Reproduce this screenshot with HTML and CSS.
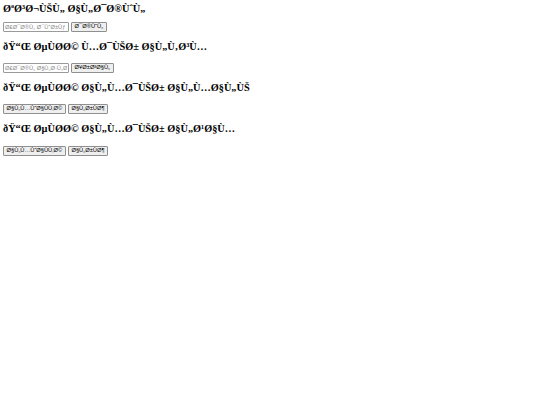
FILE: index.html
```html
<!DOCTYPE html>
<html lang="ar">
<head>
<meta charset="utf-8">
<title>Ø§Ù„Ù†Ø¸Ø§Ù…</title>
<link rel="stylesheet" href="styles.css">
</head>
<body>
<main class="page">
  <section class="block block-first">
    <h2 class="title">ØªØ³Ø¬ÙŠÙ„ Ø§Ù„Ø¯Ø®ÙˆÙ„</h2>
    <div class="row">
      <input class="field" type="text" placeholder="Ø£Ø¯Ø®Ù„ Ø¯ÙˆØ±Ùƒ (Ù…Ø¯ÙŠØ± Ù‚Ø³Ù…)">
      <button class="btn" type="button">Ø¯Ø®ÙˆÙ„</button>
    </div>
  </section>
  <section class="block">
    <h2 class="title">ðŸ“Œ ØµÙØ&shy;Ø© Ù…Ø¯ÙŠØ± Ø§Ù„Ù‚Ø³Ù…</h2>
    <div class="row">
      <input class="field" type="text" placeholder="Ø£Ø¯Ø®Ù„ Ø§Ù„Ø·Ù„Ø¨">
      <button class="btn" type="button">Ø¥Ø±Ø³Ø§Ù„</button>
    </div>
  </section>
  <section class="block">
    <h2 class="title">ðŸ“Œ ØµÙØ&shy;Ø© Ø§Ù„Ù…Ø¯ÙŠØ± Ø§Ù„Ù…Ø§Ù„ÙŠ</h2>
    <div class="row">
      <button class="btn" type="button">Ø§Ù„Ù…ÙˆØ§ÙÙ‚Ø©</button>
      <button class="btn" type="button">Ø§Ù„Ø±ÙØ¶</button>
    </div>
  </section>
  <section class="block block-last">
    <h2 class="title">ðŸ“Œ ØµÙØ&shy;Ø© Ø§Ù„Ù…Ø¯ÙŠØ± Ø§Ù„Ø¹Ø§Ù…</h2>
    <div class="row">
      <button class="btn" type="button">Ø§Ù„Ù…ÙˆØ§ÙÙ‚Ø©</button>
      <button class="btn" type="button">Ø§Ù„Ø±ÙØ¶</button>
    </div>
  </section>
</main>
</body>
</html>
```
FILE: styles.css
```css
html, body {
  margin: 0;
  padding: 0;
  background: #ffffff;
}
body {
  font-family: "Liberation Serif", "DejaVu Serif", serif;
  color: #000000;
}
.page {
  padding: 3px 3px;
  display: flex;
  flex-direction: column;
}
.block {
  display: flex;
  flex-direction: column;
  margin-bottom: 9px;
}
.title {
  margin: 0 0 10px 0;
  font-size: 10.3px;
  line-height: 12px;
  font-weight: bold;
  white-space: nowrap;
}
.block-first .title {
  margin-bottom: 7px;
}
.block-last .title {
  margin-bottom: 11px;
}
.row {
  display: flex;
  align-items: center;
  gap: 2px;
  height: 10px;
}
.field {
  box-sizing: border-box;
  width: 66px;
  height: 10px;
  margin: 0;
  padding: 0 1px;
  border: 1px solid #9a9a9a;
  border-radius: 1px;
  background: #ffffff;
  font-family: "Liberation Sans", Arial, sans-serif;
  font-size: 5.75px;
  color: #000000;
  outline: none;
}
.field::placeholder {
  color: #8a8a8a;
}
.btn {
  box-sizing: border-box;
  height: 10px;
  margin: 0;
  padding: 0 2.6px;
  border: 1px solid #8f8f8f;
  border-radius: 1px;
  background: #efefef;
  font-family: "Liberation Sans", Arial, sans-serif;
  font-size: 5.75px;
  line-height: 1;
  color: #000000;
  white-space: nowrap;
}
```
